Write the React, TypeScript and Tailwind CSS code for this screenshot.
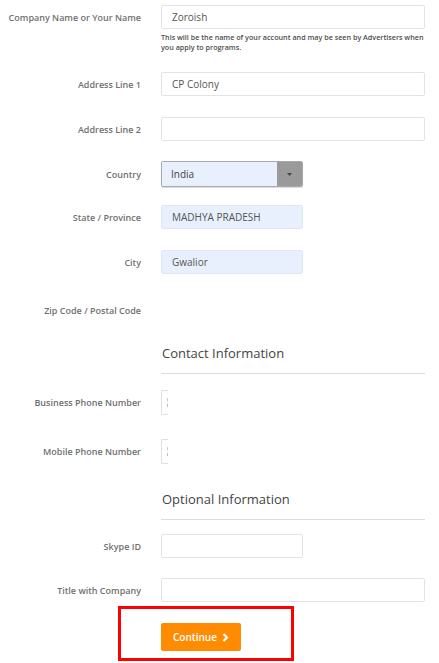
import { ReactNode } from 'react'

const font = { fontFamily: '"Open Sans", "Noto Sans", sans-serif' }

function Row({ label, children, className = '' }: { label: string; children?: ReactNode; className?: string }) {
  return (
    <div className={`flex items-center ${className}`}>
      <div className="w-[141px] shrink-0 text-right text-[9px] font-semibold text-[#707070] leading-none">{label}</div>
      <div className="ml-[20px] flex-1">{children}</div>
    </div>
  )
}

function TextBox({ value = '', wide = true, filled = false }: { value?: string; wide?: boolean; filled?: boolean }) {
  return (
    <div
      className={`h-[24px] rounded-[2px] border flex items-center px-[10px] text-[10px] text-[#555] ${wide ? 'w-[264px]' : 'w-[142px]'} ${filled ? 'bg-[#e8f0fe] border-[#e0e6f0]' : 'bg-white border-[#e3e3e3]'}`}
    >
      {value}
    </div>
  )
}

function PhoneBox() {
  return (
    <div className="h-[25px] w-[7px] border-y border-l border-[#e0e0e0] rounded-l-[2px] flex flex-col justify-center items-end">
      <div className="w-[1px] h-[3px] bg-[#f5c27a]" />
      <div className="w-[1px] h-[3px] bg-[#f3f3f3]" />
      <div className="w-[1px] h-[3px] bg-[#a8cfa8]" />
    </div>
  )
}

function Heading({ text, className = '' }: { text: string; className?: string }) {
  return (
    <div className={`ml-[161px] w-[264px] ${className}`}>
      <div className="text-[13px] text-[#444] leading-none pl-[1px]">{text}</div>
      <div className="mt-[13px] h-[1px] bg-[#dcdcdc]" />
    </div>
  )
}

export default function App() {
  return (
    <div className="w-[439px] h-[663px] bg-white overflow-hidden" style={font}>
      <div className="pt-[5px]">
        <Row label="Company Name or Your Name">
          <TextBox value="Zoroish" />
        </Row>
        <div className="ml-[161px] mt-[3px] w-[266px] text-[7.2px] leading-[10px] font-semibold text-[#4d4d4d]">
          This will be the name of your account and may be seen by Advertisers when you apply to programs.
        </div>

        <Row label="Address Line 1" className="mt-[20px]">
          <TextBox value="CP Colony" />
        </Row>
        <Row label="Address Line 2" className="mt-[21px]">
          <TextBox />
        </Row>

        <Row label="Country" className="mt-[20px]">
          <div className="h-[26px] w-[142px] flex border border-[#a9a9a9] rounded-[2px] shadow-[0_1px_1px_rgba(0,0,0,0.15)] overflow-hidden">
            <div className="flex-1 bg-[#e8f0fe] flex items-center pl-[9px] text-[10px] text-[#444]">India</div>
            <div className="w-[25px] bg-[#9a9a9a] flex items-center justify-center">
              <svg width="5" height="3" viewBox="0 0 5 3"><path d="M0 0h5L2.5 3z" fill="#444" /></svg>
            </div>
          </div>
        </Row>
        <Row label="State / Province" className="mt-[18px]">
          <TextBox value="MADHYA PRADESH" wide={false} filled />
        </Row>
        <Row label="City" className="mt-[21px]">
          <TextBox value="Gwalior" wide={false} filled />
        </Row>
        <Row label="Zip Code / Postal Code" className="mt-[24px]">
          <div className="h-[24px]" />
        </Row>

        <Heading text="Contact Information" className="mt-[25px]" />

        <Row label="Business Phone Number" className="mt-[16px]">
          <PhoneBox />
        </Row>
        <Row label="Mobile Phone Number" className="mt-[24px]">
          <PhoneBox />
        </Row>

        <Heading text="Optional Information" className="mt-[29px]" />

        <Row label="Skype ID" className="mt-[14px]">
          <TextBox wide={false} />
        </Row>
        <Row label="Title with Company" className="mt-[20px]">
          <TextBox />
        </Row>

        <div className="mt-[4px] ml-[118px] w-[176px] h-[55px] border-[3px] border-[#ff0000] pl-[40px] pt-[14px]">
          <button className="h-[28px] w-[80px] rounded-[2px] bg-[#ff8c00] text-white text-[10px] font-semibold flex items-center justify-center gap-[5px]">
            Continue
            <svg width="7" height="9" viewBox="0 0 7 9"><path d="M1.5 1L5 4.5 1.5 8" stroke="#fff" strokeWidth="2.2" fill="none" /></svg>
          </button>
        </div>
      </div>
    </div>
  )
}
